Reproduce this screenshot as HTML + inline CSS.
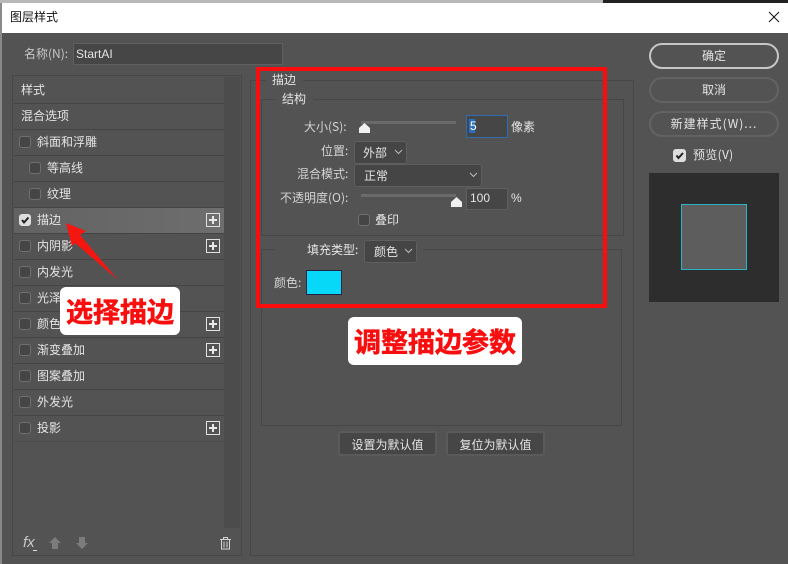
<!DOCTYPE html>
<html lang="zh"><head><meta charset="utf-8"><style>
html,body{margin:0;padding:0;width:788px;height:564px;overflow:hidden;background:#535353}
body{position:relative;font:12px/14px "WenQuanYi Zen Hei","Noto Sans CJK SC",sans-serif;color:#e4e4e4}
div,span{position:absolute;box-sizing:border-box;white-space:nowrap}
.t{height:14px}
.row{left:14px;width:210px;height:1px;background:#444}
.cb{width:12px;height:12px;border:1px solid #6f6f6f;border-radius:3px;background:#454545}
.plus{left:206px;width:14px;height:14px;border:1px solid #e0e0e0}
.plus:before{content:"";position:absolute;left:2px;top:5px;width:8px;height:2px;background:#e8e8e8}
.plus:after{content:"";position:absolute;left:5px;top:2px;width:2px;height:8px;background:#e8e8e8}
.box{border:1px solid #474747}
.gap{background:#535353}
.sel{background:#454545;border:1px solid #5e5e5e;border-radius:3px}
.sel svg{position:absolute;right:3px;top:7px}
.inp{background:#464646;border:1px solid #5f5f5f}
.track{height:3px;background:#6a6a6a}
.btn{border-radius:13px;text-align:center;line-height:22px;height:26px;left:649px;width:130px;border:2px solid #636363}
.b2{background:#464646;border:2px solid #5a5a5a;border-radius:3px;height:25px;text-align:center;line-height:23px}
.note{background:#fff;border-radius:6px;color:#f70f0f;font:bold 27px/48px "Noto Sans CJK SC",sans-serif;text-align:center;height:48px;-webkit-text-stroke:0.6px #f70f0f}
</style></head><body>
<div style="left:0;top:0;width:603px;height:3px;background:#b8b8b8"></div>
<div style="left:603px;top:0;width:185px;height:3px;background:#222"></div>
<div style="left:0;top:3px;width:788px;height:30px;background:#fff"></div>
<div style="left:0;top:3px;width:2px;height:561px;background:#8a8a8a"></div>
<div style="left:2px;top:33px;width:786px;height:531px;background:#535353"></div>
<div class="t" style="left:10px;top:10px;color:#111">图层样式</div>
<svg style="position:absolute;left:768px;top:11px" width="12" height="12"><path d="M1 1L11 11M11 1L1 11" stroke="#111" fill="none"/></svg>

<div class="t" style="left:24px;top:47px;color:#c8c8c8">名称(N):</div>
<div class="inp" style="left:73px;top:43px;width:210px;height:22px"></div>
<div class="t" style="left:76px;top:47px;font-family:'Liberation Sans',sans-serif">StartAI</div>

<div class="box" style="left:12px;top:75px;width:230px;height:481px"></div>
<div style="left:224px;top:77px;width:16px;height:451px;background:#4c4c4c"></div>
<div style="left:14px;top:208px;width:210px;height:25px;background:linear-gradient(90deg,#626262,#6e6e6e)"></div>
<div class="row" style="top:103px"></div><div class="row" style="top:129px"></div><div class="row" style="top:155px"></div>
<div class="row" style="top:181px"></div><div class="row" style="top:207px"></div><div class="row" style="top:233px"></div>
<div class="row" style="top:259px"></div><div class="row" style="top:285px"></div><div class="row" style="top:311px"></div>
<div class="row" style="top:337px"></div><div class="row" style="top:363px"></div><div class="row" style="top:389px"></div>
<div class="row" style="top:415px"></div><div class="row" style="top:441px;background:#4b4b4b"></div>

<div class="t" style="left:21px;top:83px">样式</div>
<div class="t" style="left:21px;top:109px">混合选项</div>
<div class="cb" style="left:19px;top:136px"></div><div class="t" style="left:37px;top:135px">斜面和浮雕</div>
<div class="cb" style="left:29px;top:162px"></div><div class="t" style="left:47px;top:161px">等高线</div>
<div class="cb" style="left:29px;top:188px"></div><div class="t" style="left:47px;top:187px">纹理</div>
<div class="cb" style="left:19px;top:214px;background:#dedede;border-color:#dedede"></div>
<svg style="position:absolute;left:19px;top:214px" width="12" height="12"><path d="M3 6L5 8.500L9.500 3.500" stroke="#222" stroke-width="2" fill="none"/></svg>
<div class="t" style="left:37px;top:213px">描边</div><div class="plus" style="top:213px"></div>
<div class="cb" style="left:19px;top:240px"></div><div class="t" style="left:37px;top:239px">内阴影</div><div class="plus" style="top:239px"></div>
<div class="cb" style="left:19px;top:266px"></div><div class="t" style="left:37px;top:265px">内发光</div>
<div class="cb" style="left:19px;top:292px"></div><div class="t" style="left:37px;top:291px">光泽</div>
<div class="cb" style="left:19px;top:318px"></div><div class="t" style="left:37px;top:317px">颜色叠加</div><div class="plus" style="top:317px"></div>
<div class="cb" style="left:19px;top:344px"></div><div class="t" style="left:37px;top:343px">渐变叠加</div><div class="plus" style="top:343px"></div>
<div class="cb" style="left:19px;top:370px"></div><div class="t" style="left:37px;top:369px">图案叠加</div>
<div class="cb" style="left:19px;top:396px"></div><div class="t" style="left:37px;top:395px">外发光</div>
<div class="cb" style="left:19px;top:422px"></div><div class="t" style="left:37px;top:421px">投影</div><div class="plus" style="top:421px"></div>

<div style="left:23px;top:534px;font:italic 15px/18px 'Liberation Sans',sans-serif;color:#c8c8c8">fx</div>
<div style="left:33px;top:550px;width:4px;height:1px;background:#ddd"></div>
<svg style="position:absolute;left:48px;top:536px" width="14" height="14"><path d="M7 1L13 7H10V13H4V7H1Z" fill="#7c7c7c"/></svg>
<svg style="position:absolute;left:75px;top:536px" width="14" height="14"><path d="M4 1H10V7H13L7 13L1 7H4Z" fill="#7c7c7c"/></svg>
<svg style="position:absolute;left:219px;top:536px" width="13" height="14"><path d="M1 3.500H12M4.500 3V1.500H8.500V3M2.500 4V13H10.500V4M5 5.500V11.500M8 5.500V11.500" stroke="#d4d4d4" fill="none"/></svg>

<div class="box" style="left:250px;top:80px;width:384px;height:476px"></div>
<div class="gap" style="left:266px;top:75px;width:37px;height:12px"></div>
<div class="t" style="left:272px;top:73px">描边</div>
<div class="box" style="left:261px;top:99px;width:363px;height:137px"></div>
<div class="gap" style="left:276px;top:94px;width:37px;height:12px"></div>
<div class="t" style="left:282px;top:92px">结构</div>

<div class="t" style="left:304px;top:120px;color:#d4d4d4">大小(S):</div>
<div class="track" style="left:361px;top:121px;width:95px"></div>
<svg style="position:absolute;left:358px;top:123px" width="13" height="11"><path d="M6.500 0L12 5V10H1V5Z" fill="#f0f0f0"/></svg>
<div class="inp" style="left:466px;top:115px;width:42px;height:23px;border:1px solid #2f6cb0"></div>
<div style="left:469px;top:119px;width:6px;height:14px;background:#2a6fc0"></div>
<div class="t" style="left:470px;top:119px;color:#fff;font-family:'Liberation Sans',sans-serif">5</div>
<div class="t" style="left:511px;top:120px">像素</div>

<div class="t" style="left:321px;top:144px;color:#d4d4d4">位置:</div>
<div class="sel" style="left:354px;top:141px;width:53px;height:23px"><svg width="9" height="6"><path d="M1 1L4.500 4.500L8 1" stroke="#bbb" fill="none"/></svg></div>
<div class="t" style="left:363px;top:146px">外部</div>
<div class="t" style="left:297px;top:167px;color:#d4d4d4">混合模式:</div>
<div class="sel" style="left:354px;top:164px;width:128px;height:23px"><svg width="9" height="6"><path d="M1 1L4.500 4.500L8 1" stroke="#bbb" fill="none"/></svg></div>
<div class="t" style="left:364px;top:169px">正常</div>
<div class="t" style="left:280px;top:191px;color:#d4d4d4">不透明度(O):</div>
<div class="track" style="left:361px;top:194px;width:95px"></div>
<svg style="position:absolute;left:450px;top:197px" width="13" height="11"><path d="M6.500 0L12 5V10H1V5Z" fill="#f0f0f0"/></svg>
<div class="inp" style="left:466px;top:188px;width:42px;height:22px"></div>
<div class="t" style="left:470px;top:191px;font-family:'Liberation Sans',sans-serif">100</div>
<div class="t" style="left:511px;top:191px;font-family:'Liberation Sans',sans-serif">%</div>
<div class="cb" style="left:358px;top:214px"></div><div class="t" style="left:375px;top:213px">叠印</div>

<div class="box" style="left:261px;top:249px;width:361px;height:177px"></div>
<div class="gap" style="left:275px;top:244px;width:148px;height:12px"></div>
<div class="t" style="left:307px;top:243px">填充类型:</div>
<div class="sel" style="left:364px;top:240px;width:53px;height:23px"><svg width="9" height="6"><path d="M1 1L4.500 4.500L8 1" stroke="#bbb" fill="none"/></svg></div>
<div class="t" style="left:374px;top:245px">颜色</div>
<div class="t" style="left:274px;top:276px;color:#d4d4d4">颜色:</div>
<div style="left:306px;top:270px;width:36px;height:25px;background:#08d8f8;border:1px solid #224"></div>

<div class="b2" style="left:338px;top:431px;width:99px">设置为默认值</div>
<div class="b2" style="left:446px;top:431px;width:99px">复位为默认值</div>

<div class="btn" style="top:43px;border-color:#c6c6c6">确定</div>
<div class="btn" style="top:77px">取消</div>
<div class="btn" style="top:111px;letter-spacing:1px">新建样式(W)...</div>
<div class="cb" style="left:673px;top:149px;width:13px;height:13px;background:#dedede;border-color:#dedede"></div>
<svg style="position:absolute;left:673px;top:149px" width="13" height="13"><path d="M3.500 6.500L5.500 9L10 4" stroke="#222" stroke-width="2" fill="none"/></svg>
<div class="t" style="left:693px;top:148px;letter-spacing:.3px">预览(V)</div>
<div style="left:649px;top:173px;width:130px;height:130px;background:#2d2d2d;border-bottom:1px solid #555"></div>
<div style="left:681px;top:204px;width:66px;height:66px;background:#5d5d5d;border:1px solid #2cb4c6"></div>

<div style="left:256px;top:67px;width:351px;height:241px;border:4px solid #fb0d0d;border-radius:1px"></div>
<svg style="position:absolute;left:60px;top:218px" width="65" height="70"><path d="M6 5L26 13L20 17L58 62L15 25L12 28Z" fill="#f5160f"/></svg>
<div class="note" style="left:60px;top:287px;width:120px">选择描边</div>
<div class="note" style="left:348px;top:317px;width:174px">调整描边参数</div>
</body></html>
